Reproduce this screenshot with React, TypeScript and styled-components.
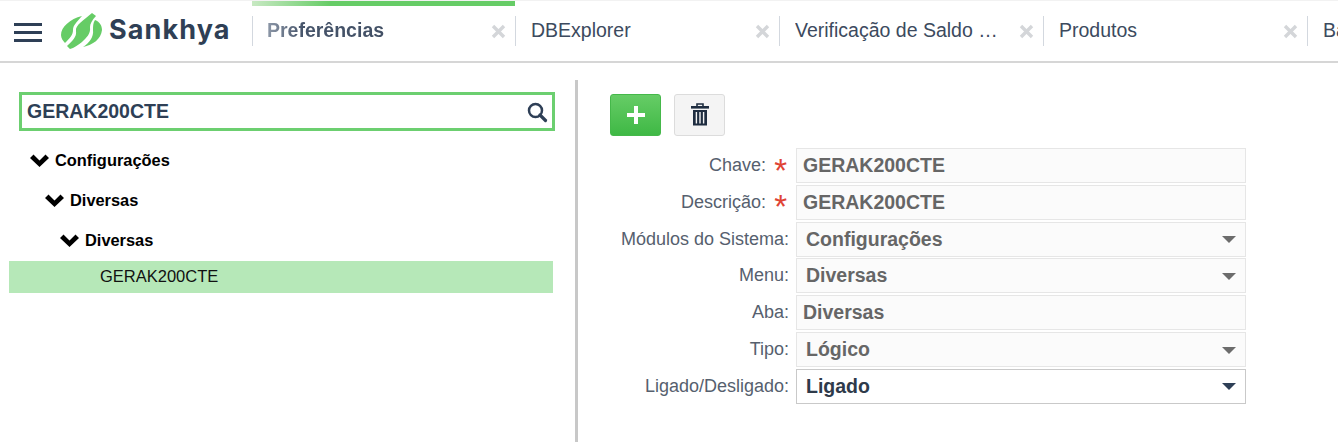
import React from "react";
import styled, { createGlobalStyle, css } from "styled-components";

const GlobalStyle = createGlobalStyle`
    html, body {
        margin: 0;
        padding: 0;
        background: #fff;
        overflow: hidden;
    }
    body {
        font-family: "Liberation Sans", Arial, sans-serif;
    }
`;

const Page = styled.div`
    width: 1338px;
    height: 442px;
    display: flex;
    flex-direction: column;
    overflow: hidden;
`;

const TopBar = styled.header`
    height: 63px;
    flex: none;
    box-sizing: border-box;
    display: flex;
    background: #fff;
    border-top: 1px solid #f2f2f2;
    border-bottom: 2px solid #d6d6d6;
    overflow: hidden;
`;

const Brand = styled.div`
    width: 252px;
    flex: none;
    display: flex;
    align-items: center;
    padding: 0 0 0 14px;
    box-sizing: border-box;
`;

const Burger = styled.div`
    width: 28px;
    height: 19px;
    flex: none;
    display: flex;
    flex-direction: column;
    justify-content: space-between;
    margin-right: 19px;
    margin-top: 2px;

    span {
        height: 3px;
        background: #2e3f56;
    }
`;

const LogoText = styled.span`
    font-family: "Inter", sans-serif;
    font-weight: 700;
    font-size: 27px;
    letter-spacing: 1.1px;
    color: #2f3f55;
    margin-left: 7px;
    margin-top: -3px;
`;

const Tab = styled.div<{ $active?: boolean }>`
    width: ${(p) => (p.$active ? 263 : 264)}px;
    flex: none;
    box-sizing: border-box;
    padding-top: 4px;
    display: flex;
    flex-direction: column;
    border-top: 5px solid transparent;
    border-image: ${(p) =>
        p.$active ? "linear-gradient(90deg, #c9e9c4 0, #66cc66 30%, #66cc66 100%) 1" : "none"};
`;

const TabInner = styled.div<{ $active?: boolean }>`
    height: 30px;
    margin-top: 6px;
    box-sizing: border-box;
    display: flex;
    align-items: center;
    padding: 0 9px 0 ${(p) => (p.$active ? 14 : 15)}px;
    border-left: 1px solid #d3d8df;
`;

const TabTitle = styled.span<{ $active?: boolean }>`
    flex: 1;
    min-width: 0;
    font-size: 19.5px;
    line-height: 28px;
    margin-bottom: 2px;
    color: #3c4a5e;
    font-weight: ${(p) => (p.$active ? 700 : 400)};
    white-space: nowrap;
    overflow: hidden;
    text-overflow: ellipsis;
    padding-right: 14px;
    ${(p) =>
        p.$active &&
        css`
            background: linear-gradient(90deg, #8d98a8 0, #46546a 36px, #3c4a5e 100%);
            background-clip: text;
            -webkit-background-clip: text;
            color: transparent;
        `}
`;

const Close = styled.svg`
    width: 15px;
    height: 15px;
    flex: none;
    margin-top: 1px;
`;

const Body = styled.main`
    flex: 1;
    display: flex;
    min-height: 0;
`;

const LeftPane = styled.aside`
    width: 578px;
    flex: none;
    box-sizing: border-box;
    padding: 12px 0 0 9px;
    margin-top: 17px;
    border-right: 3px solid #c8c8c8;
`;

const SearchBox = styled.div`
    width: 536px;
    height: 39px;
    margin: 0 0 0 10px;
    box-sizing: border-box;
    border: 3px solid #6ccf70;
    display: flex;
    align-items: center;
    justify-content: space-between;
    padding: 0 4px 0 5px;
    font-size: 19.5px;
    font-weight: 700;
    color: #2e3f56;
`;

const Tree = styled.ul`
    list-style: none;
    margin: 9px 0 0;
    padding: 0;
    width: 544px;
`;

const TreeRow = styled.li<{ $level: number }>`
    height: 40px;
    display: flex;
    align-items: center;
    gap: 6px;
    padding-left: ${(p) => 21 + p.$level * 15}px;
    font-size: 16.4px;
    font-weight: 700;
    color: #000;
`;

const TreeLeaf = styled.li`
    height: 32px;
    box-sizing: border-box;
    margin-top: 1px;
    padding: 0 0 2px 91px;
    display: flex;
    align-items: center;
    font-size: 16.5px;
    color: #111;
    background: #b6e8b8;
`;

const RightPane = styled.section`
    flex: 1;
    padding: 31px 0 0 32px;
`;

const Toolbar = styled.div`
    display: flex;
    gap: 13px;
    margin-bottom: 11.6px;
`;

const ToolButton = styled.div<{ $primary?: boolean }>`
    width: 51px;
    height: 42px;
    box-sizing: border-box;
    border-radius: 3px;
    display: flex;
    align-items: center;
    justify-content: center;
    border: 1px solid ${(p) => (p.$primary ? "#45b84a" : "#dcdcdc")};
    background: ${(p) => (p.$primary ? "linear-gradient(180deg, #66cc66, #3fb845)" : "#f4f4f4")};
`;

const Form = styled.div`
    display: flex;
    flex-direction: column;
    gap: 0.8px;
`;

const Row = styled.div`
    display: flex;
    align-items: center;
    height: 36px;
`;

const LabelCell = styled.div`
    width: 179px;
    flex: none;
    display: flex;
    justify-content: flex-end;
    align-items: center;
    font-size: 18px;
    color: #56606e;
    white-space: nowrap;
`;

const Required = styled.span`
    width: 23px;
    text-align: right;
    padding-right: 2px;
    box-sizing: border-box;
    flex: none;
    font-size: 33px;
    line-height: 26px;
    height: 16px;
    color: #e04434;
`;

const Field = styled.div<{ $editable?: boolean; $select?: boolean }>`
    width: 450px;
    height: 35px;
    margin-left: 7px;
    box-sizing: border-box;
    display: flex;
    align-items: center;
    justify-content: space-between;
    padding: 0 9px 0 ${(p) => (p.$select ? 9 : 6)}px;
    font-size: 19.5px;
    font-weight: 700;
    background: ${(p) => (p.$editable ? "#fff" : "#fbfbfb")};
    border: 1px solid ${(p) => (p.$editable ? "#c9c9c9" : "#e6e6e6")};
    color: ${(p) => (p.$editable ? "#2e3a4a" : "#666666")};
`;

const Caret = styled.span<{ $dark?: boolean }>`
    width: 0;
    height: 0;
    border-left: 7.5px solid transparent;
    border-right: 7.5px solid transparent;
    border-top: 7px solid ${(p) => (p.$dark ? "#2e3f56" : "#6c6c6c")};
    margin-top: 1px;
`;

const tabs = ["Preferências", "DBExplorer", "Verificação de Saldo de Estoque", "Produtos", "Balanço"];

const treeItems = [
    { level: 0, label: "Configurações" },
    { level: 1, label: "Diversas" },
    { level: 2, label: "Diversas" },
];

const fields = [
    { label: "Chave:", value: "GERAK200CTE", required: true },
    { label: "Descrição:", value: "GERAK200CTE", required: true },
    { label: "Módulos do Sistema:", value: "Configurações", select: true },
    { label: "Menu:", value: "Diversas", select: true },
    { label: "Aba:", value: "Diversas" },
    { label: "Tipo:", value: "Lógico", select: true },
    { label: "Ligado/Desligado:", value: "Ligado", select: true, editable: true },
];

const LogoMark = () => (
    <svg width="41" height="36" viewBox="0 0 41 36" style={{ flex: "none" }}>
        <path d="M21 3 C9 6 0 14 0 22 C0 25 2 28 4 30 C9 25 12 22 12 17 C12 12 16 9 21 3 Z" fill="#66cc66" />
        <path d="M31 0 L35 3 C31 7 29 11 29 14 C30 21 25 25 21 29 C17 32 13 35 9 36 L6 33 C11 28 16 24 15 18 C14 12 23 7 31 0 Z" fill="#66cc66" />
        <path d="M34 7 C39 9 41 13 41 17 C40 26 32 32 22 34 C28 30 33 24 32 17 C32 13 32 10 34 7 Z" fill="#66cc66" />
    </svg>
);

const ChevronIcon = () => (
    <svg width="19" height="13" viewBox="0 0 19 13" style={{ flex: "none" }}>
        <path d="M0 4 L3.5 0.5 L9.5 6.5 L15.5 0.5 L19 4 L9.5 13 Z" fill="#000" />
    </svg>
);

const CloseIcon = () => (
    <Close viewBox="0 0 15 15">
        <path d="M2 2 L13 13 M13 2 L2 13" stroke="#d4d6d9" strokeWidth="3.4" />
    </Close>
);

const SearchIcon = () => (
    <svg width="22" height="22" viewBox="0 0 22 22">
        <circle cx="9.5" cy="9.5" r="6.5" fill="none" stroke="#2e3f56" strokeWidth="2.5" />
        <path d="M14 14 L19.5 19.5" stroke="#2e3f56" strokeWidth="3.2" strokeLinecap="round" />
    </svg>
);

const TrashIcon = () => (
    <svg width="18" height="24" viewBox="0 0 18 24">
        <path d="M6 3 V1 H12 V3" fill="none" stroke="#1f2d40" strokeWidth="1.6" />
        <rect x="0" y="3" width="18" height="2.6" fill="#1f2d40" />
        <path d="M2 7 H16 V22.5 H2 Z" fill="#1f2d40" />
        <path d="M5.4 9 V20.5 M9 9 V20.5 M12.6 9 V20.5" stroke="#f4f4f4" strokeWidth="1.4" />
    </svg>
);

const PlusIcon = () => (
    <svg width="18" height="18" viewBox="0 0 18 18">
        <path d="M7 0 H11 V7 H18 V11 H11 V18 H7 V11 H0 V7 H7 Z" fill="#fff" />
    </svg>
);

export default function App() {
    return (
        <Page>
            <GlobalStyle />
            <TopBar>
                <Brand>
                    <Burger>
                        <span />
                        <span />
                        <span />
                    </Burger>
                    <LogoMark />
                    <LogoText>Sankhya</LogoText>
                </Brand>
                {tabs.map((t, i) => (
                    <Tab key={t} $active={i === 0}>
                        <TabInner $active={i === 0}>
                            <TabTitle $active={i === 0}>{t}</TabTitle>
                            <CloseIcon />
                        </TabInner>
                    </Tab>
                ))}
            </TopBar>
            <Body>
                <LeftPane>
                    <SearchBox>
                        GERAK200CTE
                        <SearchIcon />
                    </SearchBox>
                    <Tree>
                        {treeItems.map((item, i) => (
                            <TreeRow key={i} $level={item.level}>
                                <ChevronIcon />
                                {item.label}
                            </TreeRow>
                        ))}
                        <TreeLeaf>GERAK200CTE</TreeLeaf>
                    </Tree>
                </LeftPane>
                <RightPane>
                    <Toolbar>
                        <ToolButton $primary>
                            <PlusIcon />
                        </ToolButton>
                        <ToolButton>
                            <TrashIcon />
                        </ToolButton>
                    </Toolbar>
                    <Form>
                        {fields.map((f) => (
                            <Row key={f.label}>
                                <LabelCell>
                                    {f.label}
                                    {f.required && <Required>*</Required>}
                                </LabelCell>
                                <Field $select={f.select} $editable={f.editable}>
                                    {f.value}
                                    {f.select && <Caret $dark={f.editable} />}
                                </Field>
                            </Row>
                        ))}
                    </Form>
                </RightPane>
            </Body>
        </Page>
    );
}
